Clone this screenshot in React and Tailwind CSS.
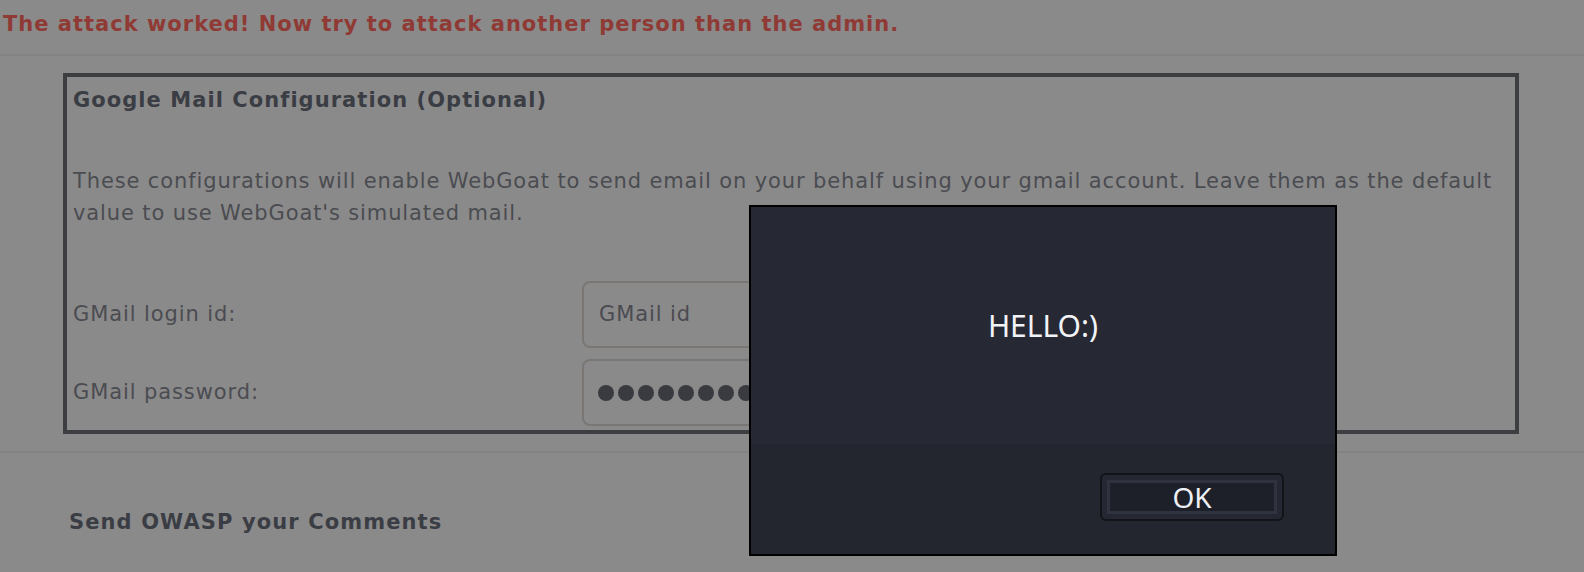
import React from 'react';

const Dots = ({ count }) => (
  <div className="flex gap-[4px]">
    {Array.from({ length: count }).map((_, i) => (
      <span key={i} className="w-[16px] h-[16px] rounded-full bg-[#3a3b40]" />
    ))}
  </div>
);

const App = () => {
  return (
    <div className="relative w-[1584px] h-[572px] overflow-hidden bg-[#8a8a8a] font-['DejaVu_Sans',sans-serif]">
      {/* Lesson feedback */}
      <div className="h-[56px] border-b-2 border-[#828282] pl-[3px] pt-[9px] text-[21px] leading-[30px] font-bold tracking-[1px] text-[#8f3a35] whitespace-nowrap">
        The attack worked! Now try to attack another person than the admin.
      </div>

      {/* Gmail config panel */}
      <div className="mt-[17px] ml-[63px] w-[1456px] h-[361px] border-4 border-[#3d3e42] pl-[6px]">
        <h3 className="mt-[8px] text-[21px] leading-[30px] font-bold tracking-[1.05px] text-[#3b3d44]">
          Google Mail Configuration (Optional)
        </h3>
        <p className="mt-[50px] text-[21px] leading-[32px] tracking-[0.88px] text-[#4b4c51] whitespace-nowrap">
          These configurations will enable WebGoat to send email on your behalf using your gmail account. Leave them as the default
          <br />
          value to use WebGoat's simulated mail.
        </p>
        <div className="mt-[52px] flex flex-col gap-[11px] text-[21px] tracking-[0.9px]">
          <div className="flex items-center h-[67px]">
            <label className="w-[509px] text-[#4b4c51]">GMail login id:</label>
            <div className="w-[700px] h-full rounded-[8px] border-2 border-[#7a7673] pl-[15px] flex items-center text-[#4a4b50]">
              GMail id
            </div>
          </div>
          <div className="flex items-center h-[67px]">
            <label className="w-[509px] text-[#4b4c51]">GMail password:</label>
            <div className="w-[700px] h-full rounded-[8px] border-2 border-[#7a7673] pl-[14px] flex items-center">
              <Dots count={12} />
            </div>
          </div>
        </div>
      </div>

      <div className="mt-[17px] h-[2px] bg-[#828282]" />

      <h3 className="mt-[54px] pl-[69px] text-[21px] leading-[30px] font-bold tracking-[1.1px] text-[#3b3d44]">
        Send OWASP your Comments
      </h3>

      {/* alert dialog */}
      <div className="absolute left-[749px] top-[205px] w-[588px] h-[351px] border-2 border-black flex flex-col font-['Noto_Sans',sans-serif]">
        <div className="h-[237px] bg-[#262833] pt-[99px] text-center text-[30px] leading-[40px] text-[#f2f3f7]">
          HELLO:)
        </div>
        <div className="flex-1 bg-[#24262f] flex justify-end items-start pt-[29px] pr-[51px]">
          <button className="w-[184px] h-[48px] rounded-[6px] border-2 border-[#131418] bg-[#252733] p-[5px]">
            <span className="h-full w-full border-[3px] border-[#2f323f] bg-[#1e2029] flex items-center justify-center text-[28px] leading-[26px] text-[#eef0f5]">
              OK
            </span>
          </button>
        </div>
      </div>
    </div>
  );
};

export default App;
